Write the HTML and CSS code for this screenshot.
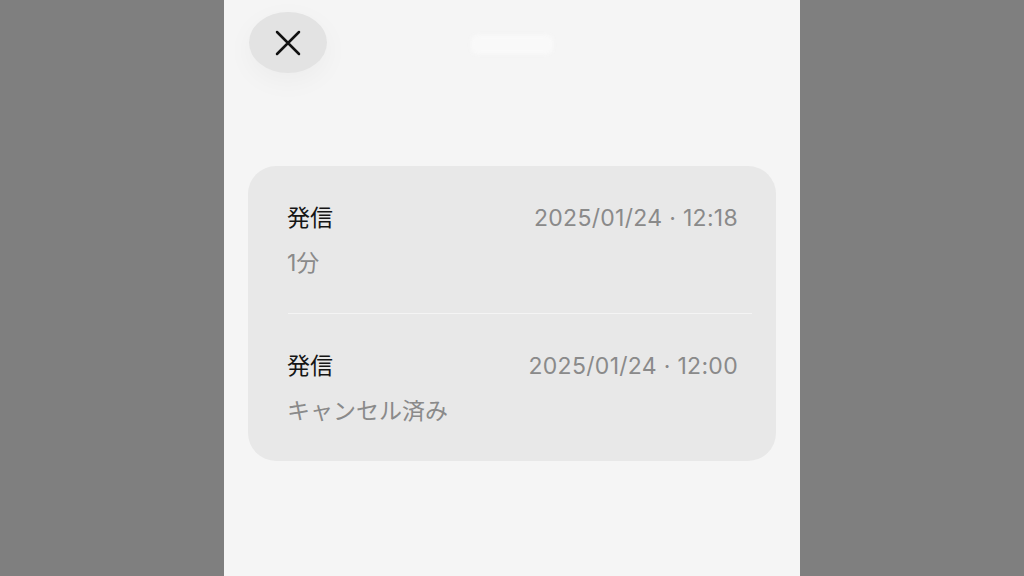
FILE: index.html
```html
<!DOCTYPE html>
<html lang="ja">
<head>
    <meta charset="UTF-8">
    <meta name="viewport" content="width=device-width, initial-scale=1.0">
    <title>通話履歴</title>
    <link rel="stylesheet" href="styles.css">
</head>
<body>

<div class="screen">
    <div class="header">
        <button type="button" class="close-btn" aria-label="閉じる">
            <svg width="26" height="26" viewBox="0 0 26 26">
                <path d="M2 2 L24 24 M24 2 L2 24" stroke="#111" stroke-width="2.5" stroke-linecap="round" fill="none"/>
            </svg>
        </button>
        <div class="title-blur"></div>
        <div class="header-spacer"></div>
    </div>

    <div class="call-card">
        <div class="call-row">
            <div class="call-line">
                <span class="call-type">発信</span>
                <span class="call-date">2025/01/24 · 12:18</span>
            </div>
            <div class="call-detail">1分</div>
        </div>
        <div class="divider"></div>
        <div class="call-row">
            <div class="call-line">
                <span class="call-type">発信</span>
                <span class="call-date">2025/01/24 · 12:00</span>
            </div>
            <div class="call-detail">キャンセル済み</div>
        </div>
    </div>
</div>

</body>
</html>
```

FILE: styles.css
```css
body {
    margin: 0;
    background-color: #7f7f7f;
    font-family: Inter, "Noto Sans CJK JP", sans-serif;
    display: flex;
    justify-content: center;
}

.screen {
    width: 576px;
    height: 576px;
    background-color: #f5f5f5;
    box-sizing: border-box;
    padding: 12px 24px 0 24px;
}

.header {
    display: grid;
    grid-template-columns: 1fr auto 1fr;
    align-items: center;
}

.close-btn {
    width: 78px;
    height: 61px;
    margin-left: 1px;
    border: none;
    border-radius: 50%;
    background-color: #e3e3e3;
    box-shadow: 0 8px 28px rgba(0, 0, 0, 0.04);
    display: flex;
    align-items: center;
    justify-content: center;
    padding: 0;
    cursor: pointer;
}

.title-blur {
    width: 82px;
    height: 19px;
    border-radius: 6px;
    background-color: #f9f9f9;
    filter: blur(2px);
    margin-top: 4px;
}

.call-card {
    margin-top: 93px;
    background-color: #e8e8e8;
    border-radius: 28px;
    padding: 0 24px 0 39px;
}

.call-row {
    padding: 37px 14px 35px 0;
    display: flex;
    flex-direction: column;
    gap: 15px;
}

.call-line {
    display: flex;
    justify-content: space-between;
    align-items: center;
}

.call-type,
.call-date,
.call-detail {
    font-size: 23px;
    line-height: 30px;
}

.call-type {
    color: #151515;
}

.call-date {
    color: #8a8a8a;
    letter-spacing: 0.3px;
}

.call-detail {
    color: #8a8a8a;
}

.divider {
    height: 1px;
    margin-left: 1px;
    background-color: #f4f4f4;
}
```
